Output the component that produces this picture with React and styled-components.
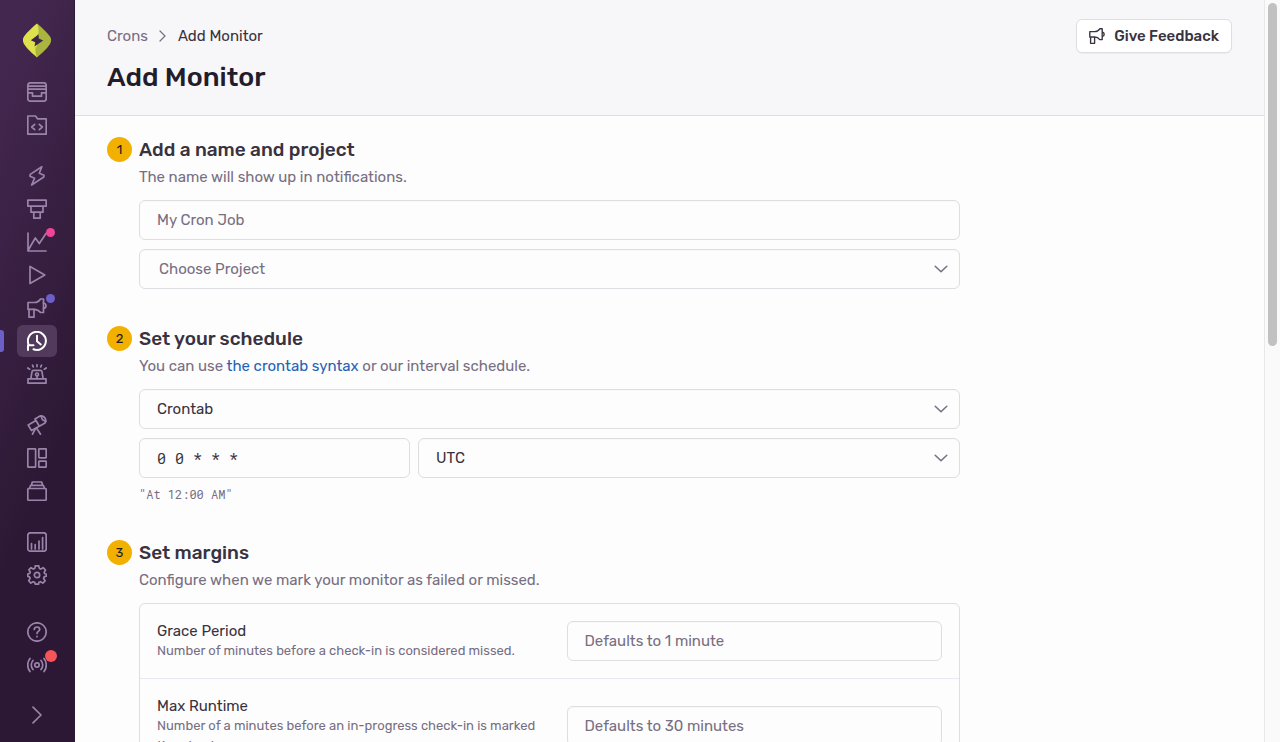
import React from "react"
import styled, { createGlobalStyle, css } from "styled-components"

const colors = {
  heading: "#231c2b",
  text: "#39323f",
  sub: "#776e82",
  border: "#dfdce2",
  link: "#2562b5",
  purple: "#6c5fc7",
  yellow: "#f2b000",
}

const GlobalStyle = createGlobalStyle`
  * {
    box-sizing: border-box;
  }

  body {
    margin: 0;
    background: #fdfdfd;
    color: ${colors.text};
    font-family: Rubik, Inter, Roboto, sans-serif;
    font-size: 15px;
    line-height: 22px;
  }

  button, input, select {
    font: inherit;
    color: inherit;
  }
`

const Shell = styled.div`
  display: flex;
  height: 100vh;
`

/* ---------- sidebar ---------- */

const Sidebar = styled.nav`
  display: flex;
  flex-direction: column;
  flex: 0 0 75px;
  padding: 23px 0 11px;
  border-right: 1px solid #2a1a35;
  background: linear-gradient(294deg, #2c1834 36%, #44274f 92%);
`

const Logo = styled.a`
  display: flex;
  justify-content: center;
  margin-bottom: 18px;

  svg {
    width: 30px;
    height: 35px;
  }
`

const NavGroups = styled.div`
  display: flex;
  flex-direction: column;
  gap: 19px;
`

const NavFooter = styled(NavGroups)`
  gap: 18px;
  margin-top: auto;
`

const NavGroup = styled.div`
  display: flex;
  flex-direction: column;
  gap: 1px;
`

const NavItem = styled.a`
  position: relative;
  display: flex;
  align-items: center;
  justify-content: center;
  height: 32px;
  margin: 0 17px;
  border-radius: 6px;
  color: #9a84aa;

  svg {
    width: 20px;
    height: 20px;
    fill: none;
    stroke: currentColor;
    stroke-width: 1.7;
    stroke-linecap: round;
    stroke-linejoin: round;
  }

  ${(p) =>
    p.$active &&
    css`
      background: #513a5b;
      color: #fff;

      svg {
        stroke-width: 2;
      }

      &::before {
        content: "";
        position: absolute;
        left: -17px;
        top: 5px;
        width: 4px;
        height: 22px;
        border-radius: 0 3px 3px 0;
        background: ${colors.purple};
      }
    `}
`

const Badge = styled.span`
  position: absolute;
  top: ${(p) => (p.$large ? 1 : 2)}px;
  right: ${(p) => (p.$large ? 0 : 2)}px;
  width: ${(p) => (p.$large ? 12 : 9)}px;
  height: ${(p) => (p.$large ? 12 : 9)}px;
  border-radius: 50%;
  background: ${(p) => p.$color};
`

/* ---------- page ---------- */

const Main = styled.main`
  flex: 1;
  min-width: 0;
  overflow-y: auto;
  scrollbar-width: none;
`

const Header = styled.header`
  display: flex;
  justify-content: space-between;
  align-items: flex-start;
  padding: 19px 32px 22px;
  border-bottom: 1px solid ${colors.border};
  background: #f7f6f9;
`

const Crumbs = styled.nav`
  display: flex;
  align-items: center;
  gap: 10px;
  height: 34px;
  color: ${colors.text};

  a {
    color: ${colors.sub};
    text-decoration: none;
  }

  svg {
    width: 10px;
    height: 12px;
  }
`

const Title = styled.h1`
  margin: 8px 0 0;
  color: ${colors.heading};
  font-size: 27px;
  font-weight: 500;
  line-height: 32px;
`

const FeedbackButton = styled.button`
  display: flex;
  align-items: center;
  gap: 9px;
  height: 34px;
  padding: 0 12px;
  border: 1px solid ${colors.border};
  border-radius: 6px;
  background: #fff;
  box-shadow: 0 1px 1px rgba(43, 34, 51, 0.04);
  font-weight: 500;

  svg {
    width: 16px;
    height: 16px;
    fill: none;
    stroke: currentColor;
    stroke-width: 1.7;
    stroke-linejoin: round;
  }
`

const Steps = styled.ol`
  display: flex;
  flex-direction: column;
  gap: 37px;
  max-width: 917px;
  margin: 0;
  padding: 21px 32px 32px;
  list-style: none;
`

const Step = styled.li`
  display: grid;
  grid-template-columns: 25px minmax(0, 1fr);
  column-gap: 7px;
`

const StepNumber = styled.span`
  display: flex;
  align-items: center;
  justify-content: center;
  height: 25px;
  border-radius: 50%;
  background: ${colors.yellow};
  color: ${colors.heading};
  font-size: 13px;
`

const StepTitle = styled.h2`
  margin: 0;
  font-size: 19px;
  font-weight: 500;
  line-height: 26px;
`

const StepText = styled.p`
  margin: 3px 0 12px;
  color: ${colors.sub};

  a {
    color: ${colors.link};
    text-decoration: none;
  }
`

const Fields = styled.div`
  display: grid;
  grid-template-columns: 1fr 2fr;
  gap: 9px 8px;
`

const control = css`
  display: block;
  width: 100%;
  height: 40px;
  padding: 0 17px;
  border: 1px solid ${colors.border};
  border-radius: 6px;
  background: #fdfdfd;
  box-shadow: inset 0 1px 1px rgba(43, 34, 51, 0.02);
  outline: none;
`

const Input = styled.input`
  ${control}
  grid-column: ${(p) => (p.$wide ? "1 / -1" : "auto")};
  font-family: ${(p) => (p.$mono ? '"Roboto Mono", "Liberation Mono", monospace' : "inherit")};

  &::placeholder {
    color: ${colors.sub};
    opacity: 1;
  }
`

const SelectBox = styled.div`
  position: relative;
  grid-column: ${(p) => (p.$wide ? "1 / -1" : "auto")};

  svg {
    position: absolute;
    top: 13px;
    right: 12px;
    width: 14px;
    height: 14px;
    pointer-events: none;
  }
`

const NativeSelect = styled.select`
  ${control}
  appearance: none;
  padding-left: ${(p) => (p.$empty ? 19 : 17)}px;
  color: ${(p) => (p.$empty ? colors.sub : colors.text)};
`

const Hint = styled.div`
  margin-top: 7px;
  color: ${colors.sub};
  font-family: "Roboto Mono", "Liberation Mono", monospace;
  font-size: 12px;
  line-height: 18px;
`

const Panel = styled.div`
  border: 1px solid ${colors.border};
  border-radius: 6px;
`

const PanelRow = styled.div`
  display: grid;
  grid-template-columns: 1fr 1fr;
  align-items: center;
  padding: 17px;

  & + & {
    border-top: 1px solid #ebe8ef;
  }
`

const RowLabel = styled.label`
  display: block;
  line-height: 20px;
`

const RowHelp = styled.span`
  display: block;
  color: ${colors.sub};
  font-size: 13px;
  line-height: 20px;
`

const RowField = styled.div`
  padding-left: 17px;
`

const ScrollTrack = styled.div`
  flex: 0 0 16px;
  padding: 3px;
  border-left: 1px solid #e8e8e8;
  background: #fafafa;
`

const ScrollThumb = styled.div`
  height: 46.6%;
  margin: 0 auto;
  width: 9px;
  border-radius: 5px;
  background: #c1c1c1;
`

/* ---------- icons ---------- */

const Icon = ({ children }) => (
  <svg viewBox="0 0 20 20" aria-hidden="true">
    {children}
  </svg>
)

const megaphone = (
  <>
    <path d="M1 4.500h6c3.500 0 5.500-1.800 6.500-3.500h3v13.500h-3c-1.500-2-3.500-3.200-6.500-3.200H1z" />
    <path d="M16.500 5c3.300.5 3.300 5 0 5.500M2 11.300v7.900h5v-7.900" />
  </>
)

const icons = {
  issues: (
    <>
      <rect x=".8" y=".8" width="18.400" height="18.400" rx="2.500" />
      <path d="M1 4.200h18M1 7.200h18M1 10.800h4.500v3.400h9v-3.400H19" />
    </>
  ),
  projects: (
    <>
      <path d="M.8 1h7.700l2.200 2.900h8.500v15.300H.8z" />
      <path d="M7.700 9.300l-3 2.700 3 2.700M12.300 9.300l3 2.700-3 2.700" />
    </>
  ),
  performance: <path d="M14.800.8L3.200 8.400l-.2 1.800 4.600 2L4.600 19l12.200-8 .2-1.800-4.700-2z" />,
  profiling: <path d="M.8 1.200h18.400v6H.8zM4 7.200h12v6H4zM6.800 13.200h6.400v6H6.800z" />,
  metrics: <path d="M1 1v18h18M1 18.500l7.300-12.500 4 5.500L19 1.500" />,
  replays: <path d="M3 1.500v17L17.800 10z" />,
  feedback: megaphone,
  crons: (
    <>
      <path d="M2 14.200a9 9 0 1 1 4.500 4M1 19v-4.800h5.500" />
      <path d="M10 4.800v5.400l3.800 3.200" />
    </>
  ),
  alerts: (
    <>
      <path d="M1 14.800h18v4.400H1zM3.800 14.800L5 7.800c.1-.9.700-1.500 1.500-1.500h7c.8 0 1.400.6 1.500 1.500l1.200 7" />
      <circle cx="10" cy="10.500" r="1.500" />
      <path d="M10 12v2.500M10 .8v1.800M5.500 1.200l.8 1.700M14.500 1.200l-.8 1.700M.8 4l1.900 1.200M19.200 4l-1.900 1.200" />
    </>
  ),
  discover: (
    <>
      <path d="M1.200 10L9 5.500l3.300 5.700-7.800 4.400zM8.800 5.500L8 4l5.500-3.200c1.700 0 3.500.5 4.500 2.200s1 3.500 0 5L12.800 11" />
      <path d="M14 1l1.300 3.500 3.500 2M8.500 13.500L5.500 19.200M9.500 13l4 6.200" />
    </>
  ),
  dashboards: (
    <>
      <rect x=".8" y=".8" width="7.800" height="18.400" rx=".6" />
      <rect x="11.800" y=".8" width="7.400" height="9" rx=".6" />
      <rect x="11.800" y="13.200" width="7.400" height="6" rx=".6" />
    </>
  ),
  releases: (
    <>
      <rect x=".8" y="7.500" width="18.400" height="11.800" rx="1" />
      <path d="M2.500 7.300l1.200-3h12.600l1.200 3M4.500 4l.8-3h9.400l.8 3" />
    </>
  ),
  stats: (
    <>
      <rect x=".8" y=".8" width="18.400" height="18.400" rx="2.500" />
      <path d="M4.500 11.500V17M8.200 12.500V17M12 9v8M15.600 5.500V17" />
    </>
  ),
  settings: (
    <>
      <circle cx="10" cy="10" r="2.700" />
      <path d="M8.300.8h3.400l.6 2.600 1.500.7 2.400-1.400 2.300 2.300-1.400 2.400.6 1.300 1.500.4v2.200l-2 .6-.6 1.600 1.500 2.300-2.300 2.300-2.400-1.400-1.500.6-.4 1.900H8.300l-.6-1.900-1.500-.6-2.400 1.400-2.100-2.300 1.400-2.400-.6-1.500-1.700-.4V9l1.900-.6.6-1.500-1.400-2 2.100-2.200 2.300 1.400 1.500-.7z" />
    </>
  ),
  help: (
    <>
      <circle cx="10" cy="10" r="9.200" />
      <path d="M7.300 7.500c.1-1.700 1.200-2.500 2.700-2.500s2.700 1 2.700 2.400c0 2-2.700 2-2.700 4.100M10 14.300v.4" />
    </>
  ),
  broadcasts: (
    <>
      <circle cx="10" cy="10" r="2.200" />
      <path d="M6 5.500c-2.300 2.500-2.300 6.500 0 9M14 5.500c2.300 2.500 2.300 6.500 0 9M3 3.500c-3 3.500-3 9.500 0 13M17 3.500c3 3.500 3 9.500 0 13" />
    </>
  ),
  expand: <path d="M6 2.200l8 7.800-8 7.800" />,
}

const Chevron = () => (
  <svg viewBox="0 0 14 14" fill="none" stroke="#776e82" strokeWidth="1.500" strokeLinecap="round" strokeLinejoin="round">
    <path d="M1.200 4.200L7 9.800l5.800-5.600" />
  </svg>
)

/* ---------- data ---------- */

const navGroups = [
  [{ id: "issues" }, { id: "projects" }],
  [
    { id: "performance" },
    { id: "profiling" },
    { id: "metrics", badge: "#f14499" },
    { id: "replays" },
    { id: "feedback", badge: colors.purple },
    { id: "crons", active: true },
    { id: "alerts" },
  ],
  [{ id: "discover" }, { id: "dashboards" }, { id: "releases" }],
  [{ id: "stats" }, { id: "settings" }],
]

const footerGroups = [
  [{ id: "help" }, { id: "broadcasts", badge: "#f55459", large: true }],
  [{ id: "expand" }],
]

const renderGroup = (group, i) => (
  <NavGroup key={i}>
    {group.map((item) => (
      <NavItem key={item.id} href={"#" + item.id} aria-label={item.id} $active={item.active}>
        <Icon>{icons[item.id]}</Icon>
        {item.badge && <Badge $color={item.badge} $large={item.large} />}
      </NavItem>
    ))}
  </NavGroup>
)

const Select = ({ label, value, wide, empty }) => (
  <SelectBox $wide={wide}>
    <NativeSelect aria-label={label} $empty={empty}>
      <option>{value}</option>
    </NativeSelect>
    <Chevron />
  </SelectBox>
)

const MarginRow = ({ id, label, help, placeholder }) => (
  <PanelRow>
    <div>
      <RowLabel htmlFor={id}>{label}</RowLabel>
      <RowHelp>{help}</RowHelp>
    </div>
    <RowField>
      <Input id={id} placeholder={placeholder} />
    </RowField>
  </PanelRow>
)

const App = () => (
  <>
    <GlobalStyle />
    <Shell>
      <Sidebar>
        <Logo href="#home" aria-label="Home">
          <svg viewBox="0 0 30 35">
            <path d="M15 .5C12 3 6 8 2 13.500c-1.500 2-1.500 5 0 7.500C5 26 11 31 15 34.500z" fill="#dfe24c" />
            <path d="M15 .5c3 2.500 9 7.500 13 13 1.500 2 1.500 5 0 7.500-3 5-9 10-13 13.500z" fill="#a9b53d" />
            <path d="M15 .5c1.500 3 1.800 7 1.500 10L8.500 17l6.500 1.500z" fill="#dfe24c" />
            <path d="M15 34.500c-1.500-3-1.800-7-1.500-10l8-6.500-6.500-1.500z" fill="#a9b53d" />
            <path d="M16.500 11.500L8.800 17.300l4.400 1.900-.7 4.300 8.700-6-4.400-1.900z" fill="#3d2549" />
          </svg>
        </Logo>
        <NavGroups>{navGroups.map(renderGroup)}</NavGroups>
        <NavFooter>{footerGroups.map(renderGroup)}</NavFooter>
      </Sidebar>

      <Main>
        <Header>
          <div>
            <Crumbs>
              <a href="#crons">Crons</a>
              <svg viewBox="0 0 10 12" fill="none" stroke="#776e82" strokeWidth="1.200" strokeLinecap="round">
                <path d="M2 1l5 5-5 5" />
              </svg>
              <span>Add Monitor</span>
            </Crumbs>
            <Title>Add Monitor</Title>
          </div>
          <FeedbackButton type="button">
            <Icon>{megaphone}</Icon>
            Give Feedback
          </FeedbackButton>
        </Header>

        <Steps>
          <Step>
            <StepNumber>1</StepNumber>
            <div>
              <StepTitle>Add a name and project</StepTitle>
              <StepText>The name will show up in notifications.</StepText>
              <Fields>
                <Input $wide aria-label="Name" placeholder="My Cron Job" />
                <Select wide empty label="Project" value="Choose Project" />
              </Fields>
            </div>
          </Step>

          <Step>
            <StepNumber>2</StepNumber>
            <div>
              <StepTitle>Set your schedule</StepTitle>
              <StepText>
                You can use <a href="#crontab">the crontab syntax</a> or our interval schedule.
              </StepText>
              <Fields>
                <Select wide label="Schedule type" value="Crontab" />
                <Input $mono aria-label="Crontab schedule" defaultValue="0 0 * * *" />
                <Select label="Timezone" value="UTC" />
              </Fields>
              <Hint>"At 12:00 AM"</Hint>
            </div>
          </Step>

          <Step>
            <StepNumber>3</StepNumber>
            <div>
              <StepTitle>Set margins</StepTitle>
              <StepText>Configure when we mark your monitor as failed or missed.</StepText>
              <Panel>
                <MarginRow
                  id="grace-period"
                  label="Grace Period"
                  help="Number of minutes before a check-in is considered missed."
                  placeholder="Defaults to 1 minute"
                />
                <MarginRow
                  id="max-runtime"
                  label="Max Runtime"
                  help="Number of a minutes before an in-progress check-in is marked timed out."
                  placeholder="Defaults to 30 minutes"
                />
              </Panel>
            </div>
          </Step>
        </Steps>
      </Main>

      <ScrollTrack>
        <ScrollThumb />
      </ScrollTrack>
    </Shell>
  </>
)

export default App
